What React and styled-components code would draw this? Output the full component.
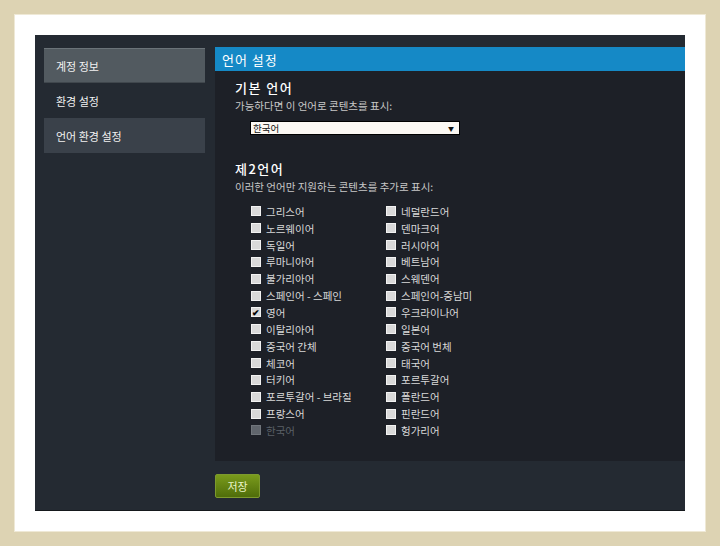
import React from "react";
import styled, { createGlobalStyle } from "styled-components";

const GlobalStyle = createGlobalStyle`
  html, body {
    margin: 0;
    padding: 0;
    background: #ffffff;
    font-family: "Noto Sans CJK KR", "Noto Sans", sans-serif;
  }
`;

const Frame = styled.div`
  width: 720px;
  height: 546px;
  box-sizing: border-box;
  border: 14px solid #ddd3b3;
  box-shadow: inset 0 0 0 1px #efe9d6;
  background: #ffffff;
  padding: 21px;
`;

const Panel = styled.div`
  display: flex;
  width: 650px;
  height: 475px;
  background: #242a32;
  box-shadow: 0 1px 0 #15181c;
`;

const Sidebar = styled.div`
  display: flex;
  flex-direction: column;
  width: 180px;
  padding: 13px 10px 0 9px;
  box-sizing: border-box;
`;

const NavItem = styled.div`
  height: 35px;
  display: flex;
  align-items: center;
  padding-left: 12px;
  font-size: 11px;
  color: #f2f2f2;
  background: ${(p) => (p.$active ? "#525a60" : p.$shaded ? "#3a414a" : "transparent")};
  border-top: 1px solid ${(p) => (p.$active ? "#6b7379" : "transparent")};
  border-bottom: 1px solid ${(p) => (p.$active ? "#40474d" : "transparent")};
  box-sizing: border-box;
`;

const Main = styled.div`
  flex: 1;
  display: flex;
  flex-direction: column;
  padding-top: 12px;
`;

const Header = styled.div`
  height: 24px;
  background: #1589c6;
  color: #ffffff;
  font-size: 13px;
  letter-spacing: 1px;
  display: flex;
  align-items: center;
  padding-left: 7px;
`;

const Content = styled.div`
  height: 390px;
  background: #1d2027;
  padding: 9px 0 0 20px;
  box-sizing: border-box;
`;

const Title = styled.div`
  font-size: 13px;
  font-weight: 500;
  color: #ffffff;
  letter-spacing: 1.5px;
  line-height: 16px;
  height: 16px;
`;

const Sub = styled.div`
  margin-top: 3px;
  font-size: 10.5px;
  color: #c8c8c8;
  line-height: 13px;
  height: 13px;
`;

const Select = styled.div`
  margin: 9px 0 0 15px;
  width: 210px;
  height: 14px;
  background: #fbf8f3;
  border: 1px solid #000;
  box-sizing: border-box;
  display: flex;
  align-items: center;
  justify-content: space-between;
  padding: 0 5px 0 2px;
  font-size: 9.5px;
  color: #111;
`;

const Arrow = styled.span`
  font-size: 6px;
`;

const Section = styled.div`
  margin-top: ${(p) => p.$top || 0}px;
`;

const Grid = styled.div`
  display: grid;
  grid-template-columns: 135px 135px;
  grid-auto-rows: 16.85px;
  margin: 10px 0 0 16px;
`;

const Option = styled.label`
  display: flex;
  align-items: center;
  gap: 5px;
  font-size: 10.5px;
  color: ${(p) => (p.$disabled ? "#5b6068" : "#d9d9d9")};
`;

const Box = styled.span`
  width: 8px;
  height: 8px;
  display: flex;
  align-items: center;
  justify-content: center;
  background: ${(p) => (p.$disabled ? "#60656c" : "#d9d9d9")};
  border: 1px solid ${(p) => (p.$disabled ? "#70757b" : "#f2f2f2")};
  color: #000;
  font-size: 9px;
  line-height: 1;
  font-weight: 700;
`;

const Footer = styled.div`
  padding-top: 11px;
`;

const SaveButton = styled.button`
  width: 45px;
  height: 24px;
  border: 1px solid #7d9a2e;
  border-radius: 2px;
  background: linear-gradient(#7a9b1c, #4f6d0a);
  color: #eaf4c8;
  font-family: "Noto Sans CJK KR", "Noto Sans", sans-serif;
  font-size: 11px;
  padding: 0;
`;

const left = [
  "그리스어", "노르웨이어", "독일어", "루마니아어", "불가리아어", "스페인어 - 스페인",
  "영어", "이탈리아어", "중국어 간체", "체코어", "터키어", "포르투갈어 - 브라질",
  "프랑스어", "한국어",
];
const right = [
  "네덜란드어", "덴마크어", "러시아어", "베트남어", "스웨덴어", "스페인어-중남미",
  "우크라이나어", "일본어", "중국어 번체", "태국어", "포르투갈어", "폴란드어",
  "핀란드어", "헝가리어",
];

function Check({ label, checked, disabled }) {
  return (
    <Option $disabled={disabled}>
      <Box $disabled={disabled}>{checked ? "✔" : ""}</Box>
      {label}
    </Option>
  );
}

export default function App() {
  const items = [];
  left.forEach((l, i) => {
    items.push(<Check key={"l" + i} label={l} checked={l === "영어"} disabled={l === "한국어"} />);
    items.push(<Check key={"r" + i} label={right[i]} />);
  });
  return (
    <>
      <GlobalStyle />
      <Frame>
        <Panel>
          <Sidebar>
            <NavItem $active>계정 정보</NavItem>
            <NavItem>환경 설정</NavItem>
            <NavItem $shaded>언어 환경 설정</NavItem>
          </Sidebar>
          <Main>
            <Header>언어 설정</Header>
            <Content>
              <Section>
                <Title>기본 언어</Title>
                <Sub>가능하다면 이 언어로 콘텐츠를 표시:</Sub>
                <Select>
                  <span>한국어</span>
                  <Arrow>▼</Arrow>
                </Select>
              </Section>
              <Section $top={26}>
                <Title>제2언어</Title>
                <Sub>이러한 언어만 지원하는 콘텐츠를 추가로 표시:</Sub>
                <Grid>{items}</Grid>
              </Section>
            </Content>
            <Footer>
              <SaveButton>저장</SaveButton>
            </Footer>
          </Main>
        </Panel>
      </Frame>
    </>
  );
}
